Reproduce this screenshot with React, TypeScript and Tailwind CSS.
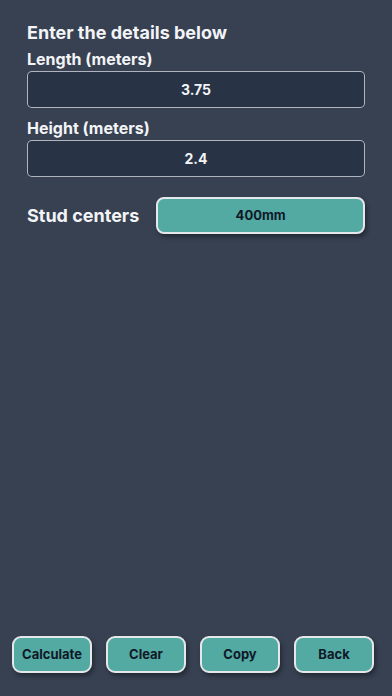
import { useState } from "react";

const FONT = { fontFamily: "Inter, 'Noto Sans', sans-serif" };

function Field({ label, value }: { label: string; value: string }) {
  return (
    <div className="flex flex-col">
      <div className="text-[16px] font-bold leading-[20px] text-gray-100">{label}</div>
      <div className="mt-[2px] flex h-[37px] items-center justify-center rounded-[5px] border border-gray-300/80 bg-[#283346] text-[14px] font-bold text-gray-100">
        {value}
      </div>
    </div>
  );
}

const ACTIONS = ["Calculate", "Clear", "Copy", "Back"];

export default function App() {
  const [length] = useState("3.75");
  const [height] = useState("2.4");

  return (
    <div style={FONT} className="flex h-[696px] w-[392px] flex-col bg-[#374152]">
      <div className="flex flex-col px-[27px] pt-[21px]">
        <div className="text-[18px] font-bold leading-[24px] text-gray-100">Enter the details below</div>
        <div className="mt-[4px] flex flex-col gap-[10px]">
          <Field label="Length (meters)" value={length} />
          <Field label="Height (meters)" value={height} />
        </div>
        <div className="mt-[20px] flex items-center gap-[17px]">
          <div className="text-[18px] font-bold text-gray-100">Stud centers</div>
          <button className="flex h-[37px] flex-1 items-center justify-center rounded-[8px] border-2 border-gray-200 bg-[#52aaa2] text-[13px] font-bold text-gray-900 shadow-[2px_3px_4px_rgba(0,0,0,0.35)]">
            400mm
          </button>
        </div>
      </div>
      <div className="flex-1" />
      <div className="flex gap-[14px] px-[12px] pb-[23px]">
        {ACTIONS.map((a) => (
          <button
            key={a}
            className="flex h-[37px] w-[80px] items-center justify-center rounded-[9px] border-2 border-gray-200 bg-[#52aaa2] text-[13px] font-bold text-gray-900 shadow-[2px_3px_4px_rgba(0,0,0,0.35)]"
          >
            {a}
          </button>
        ))}
      </div>
    </div>
  );
}
